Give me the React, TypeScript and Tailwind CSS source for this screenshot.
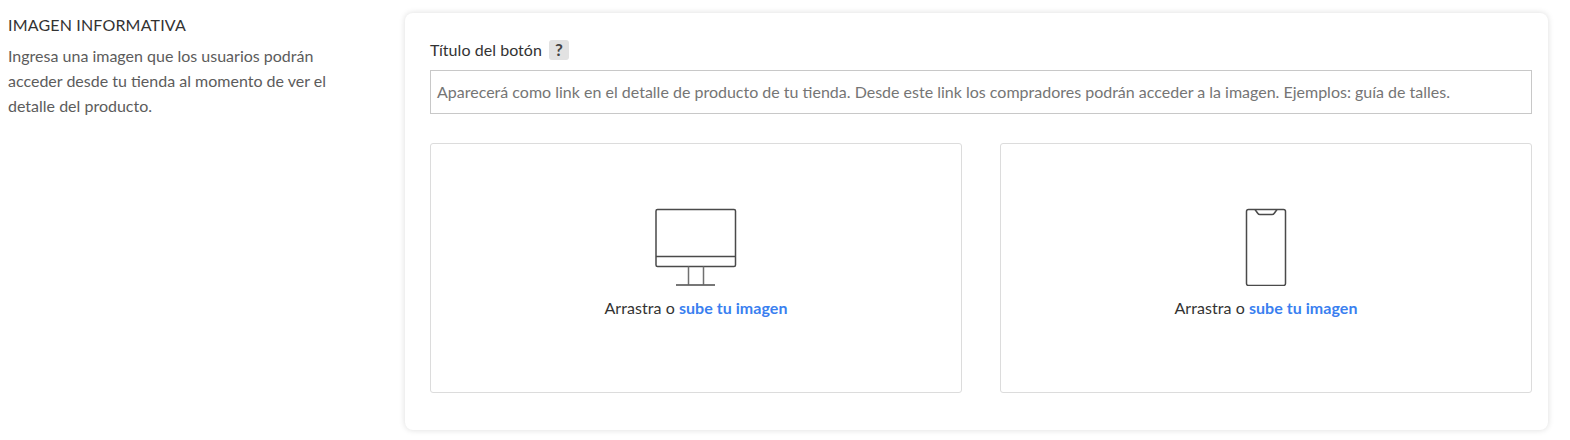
import React from "react";

function Desktop() {
  return (
    <svg width="82" height="78" viewBox="0 0 82 78" fill="none" stroke="#4a4a4a" strokeWidth="1.5">
      <rect x="1" y="1.5" width="79.5" height="57" rx="1.5" />
      <path d="M1 48.5H80.5" />
      <path d="M33.5 58.5V76.5M48.5 58.5V76.5" stroke="#707070" />
      <path d="M21 77H60" />
    </svg>
  );
}

function Phone() {
  return (
    <svg width="42" height="78" viewBox="0 0 42 78" fill="none" stroke="#4a4a4a" strokeWidth="1.5">
      <rect x="1.5" y="1.5" width="39" height="76" rx="2" />
      <path d="M10 1.5L12.5 5Q13.5 6.5 15 6.5H27Q28.5 6.5 29.5 5L32 1.5" />
    </svg>
  );
}

function Upload({ children }: { children: React.ReactNode }) {
  return (
    <div className="flex h-[250px] w-[532px] flex-col items-center rounded-[3px] border border-[#dcdcdc] pt-[64px]">
      {children}
      <p className="mt-[12px] text-[16px] leading-[20px] tracking-[0.05px] text-[#333333]">
        Arrastra o <span className="font-bold text-[#3a7ff0]">sube tu imagen</span>
      </p>
    </div>
  );
}

export default function App() {
  return (
    <div className="flex h-[440px] w-[1570px] bg-white pt-[13px] font-['Lato','Noto_Sans',sans-serif]">
      <div className="w-[405px] shrink-0 pl-2">
        <h2 className="-mt-px text-[16px] leading-[25px] font-normal tracking-[0.17px] text-[#333333]">IMAGEN INFORMATIVA</h2>
        <p className="mt-[6px] w-[330px] text-[16px] leading-[25px] text-[#5c5c5c]">
          Ingresa una imagen que los usuarios podrán acceder desde tu tienda al momento de ver el detalle del producto.
        </p>
      </div>
      <div className="h-[417px] w-[1143px] rounded-lg bg-white pt-[27px] pr-[16px] pl-[25px] shadow-[0_0_6px_rgba(0,0,0,0.14)]">
        <div className="flex h-[20px] items-center text-[16px] leading-[20px] tracking-[0.05px] text-[#333333]">
          <span>Título del botón</span>
          <span className="ml-[7px] flex h-[20px] w-[20px] items-center justify-center rounded-[3px] bg-[#e2e2e2] text-[17px] font-bold text-[#444444]">?</span>
        </div>
        <div className="mt-[10px] flex h-[44px] w-[1102px] items-center border border-[#c8c8c8] px-[6px] text-[16px] text-[#757575]">
          Aparecerá como link en el detalle de producto de tu tienda. Desde este link los compradores podrán acceder a la imagen. Ejemplos: guía de talles.
        </div>
        <div className="mt-[29px] flex w-[1102px] justify-between">
          <Upload><Desktop /></Upload>
          <Upload><Phone /></Upload>
        </div>
      </div>
    </div>
  );
}
